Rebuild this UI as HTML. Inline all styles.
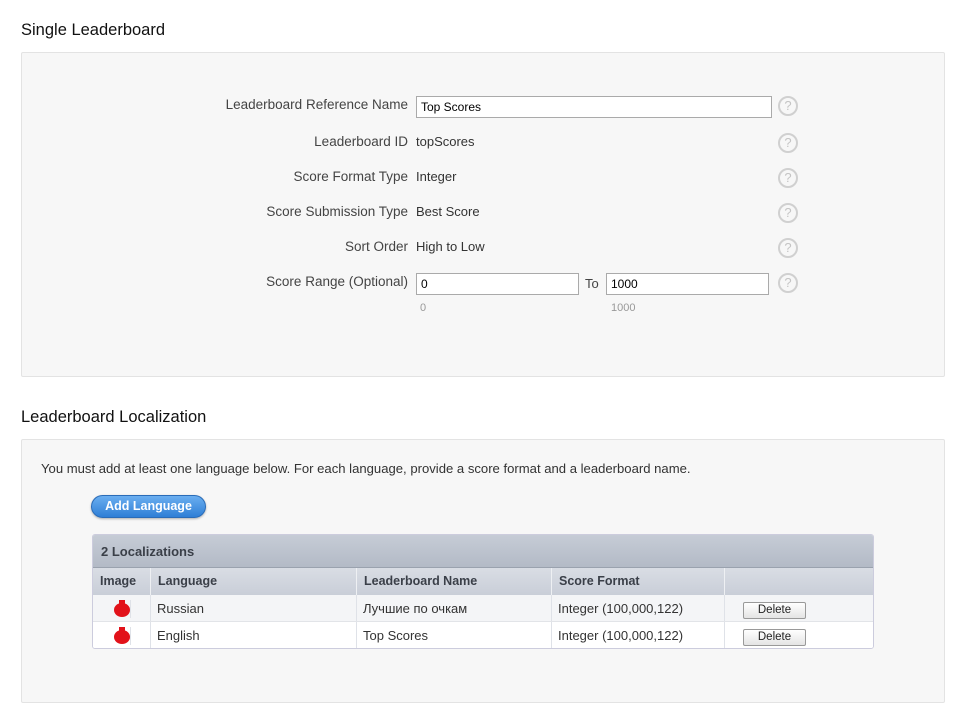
<!DOCTYPE html>
<html><head><style>
*{box-sizing:border-box;margin:0;padding:0}
body{width:969px;height:722px;background:#fff;font-family:"Liberation Sans","DejaVu Sans",sans-serif;color:#333;font-size:13px;position:relative;overflow:hidden}
.a{position:absolute}
h2{position:absolute;font-size:16.5px;font-weight:normal;color:#111}
.panel{position:absolute;background:#f7f7f7;border:1px solid #e3e3e3;border-radius:2px}
.lbl{position:absolute;right:561px;text-align:right;color:#444;white-space:nowrap;font-size:13.5px}
.val{position:absolute;left:416px;color:#333}
.inp{position:absolute;background:#fff;border:1px solid #aaa;height:22px;padding:3px 4px;font-size:12px;color:#000}
.help{position:absolute;left:778px;width:20px;height:20px;border:2px solid #d0d0d0;border-radius:50%;color:#c4c4c4;font-size:13px;text-align:center;line-height:16px}
.tbl{position:absolute;left:92px;top:534px;width:782px;height:115px;border:1px solid #ccd;border-radius:3px;overflow:hidden;background:#fff}
.h1{height:33px;background:linear-gradient(#c6ccd6,#b3bac6);border-bottom:1px solid #9aa2ae;font-weight:bold;color:#3a3f48;font-size:13px;padding:9px 8px}
.h2,.r{display:flex;height:27px}
.h2{background:linear-gradient(#d9dde4,#c9ced8);font-weight:bold;color:#3a3f48;font-size:12.5px}
.h2 div,.r div{padding:6px 6px;border-right:1px solid #dfe2e8}
.h2 div{border-right:1px solid #eef0f3;padding:6px 7px}
.r{background:#f4f5f7;border-bottom:1px solid #e2e4e8}
.r+.r{background:#fff}
.c1{width:58px}.c2{width:206px}.c3{width:195px}.c4{width:173px}.c5{flex:1;border-right:none!important}
.del{display:inline-block;margin-left:12px;margin-top:-2px;width:63px;height:17px;border:1px solid #999;border-radius:2px;background:linear-gradient(#fff,#e4e4e4);text-align:center;font-size:11.5px;line-height:15px;color:#222}
.ic{width:20px;height:18px;margin:-1px 0 0 12px;position:relative}
.ic:before{content:"";position:absolute;left:3px;top:3px;width:16px;height:14px;border-radius:50%;background:#e2121a}
.ic:after{content:"";position:absolute;left:8px;top:0;width:6px;height:4px;background:#e2121a}
</style></head><body>
<h2 style="left:21px;top:21px">Single Leaderboard</h2>
<div class="panel" style="left:21px;top:52px;width:924px;height:325px"></div>
<div class="lbl" style="top:97px">Leaderboard Reference Name</div>
<div class="inp" style="left:416px;top:96px;width:356px">Top Scores</div>
<div class="help" style="top:96px">?</div>
<div class="lbl" style="top:134px">Leaderboard ID</div><div class="val" style="top:134px">topScores</div><div class="help" style="top:133px">?</div>
<div class="lbl" style="top:169px">Score Format Type</div><div class="val" style="top:169px">Integer</div><div class="help" style="top:168px">?</div>
<div class="lbl" style="top:204px">Score Submission Type</div><div class="val" style="top:204px">Best Score</div><div class="help" style="top:203px">?</div>
<div class="lbl" style="top:239px">Sort Order</div><div class="val" style="top:239px">High to Low</div><div class="help" style="top:238px">?</div>
<div class="lbl" style="top:274px">Score Range (Optional)</div>
<div class="inp" style="left:416px;top:273px;width:163px">0</div>
<div class="a" style="left:585px;top:276px;color:#444">To</div>
<div class="inp" style="left:606px;top:273px;width:163px">1000</div>
<div class="help" style="top:273px">?</div>
<div class="a" style="left:420px;top:302px;font-size:11px;color:#999">0</div>
<div class="a" style="left:611px;top:302px;font-size:11px;color:#999">1000</div>

<h2 style="left:21px;top:408px">Leaderboard Localization</h2>
<div class="panel" style="left:21px;top:439px;width:924px;height:264px"></div>
<div class="a" style="left:41px;top:461px;color:#333;font-size:13.1px">You must add at least one language below. For each language, provide a score format and a leaderboard name.</div>
<div class="a" style="left:91px;top:495px;width:115px;height:23px;border-radius:12px;background:linear-gradient(#6aaef0,#2f7fd6);border:1px solid #2a6cb8;color:#fff;font-weight:bold;font-size:12.5px;text-align:center;line-height:21px;box-shadow:0 1px 2px rgba(0,0,0,.3)">Add Language</div>
<div class="tbl">
<div class="h1">2 Localizations</div>
<div class="h2"><div class="c1">Image</div><div class="c2">Language</div><div class="c3">Leaderboard Name</div><div class="c4">Score Format</div><div class="c5"></div></div>
<div class="r"><div class="c1"><div class="ic"></div></div><div class="c2">Russian</div><div class="c3">Лучшие по очкам</div><div class="c4">Integer (100,000,122)</div><div class="c5"><span class="del">Delete</span></div></div>
<div class="r"><div class="c1"><div class="ic"></div></div><div class="c2">English</div><div class="c3">Top Scores</div><div class="c4">Integer (100,000,122)</div><div class="c5"><span class="del">Delete</span></div></div>
</div>
</body></html>
